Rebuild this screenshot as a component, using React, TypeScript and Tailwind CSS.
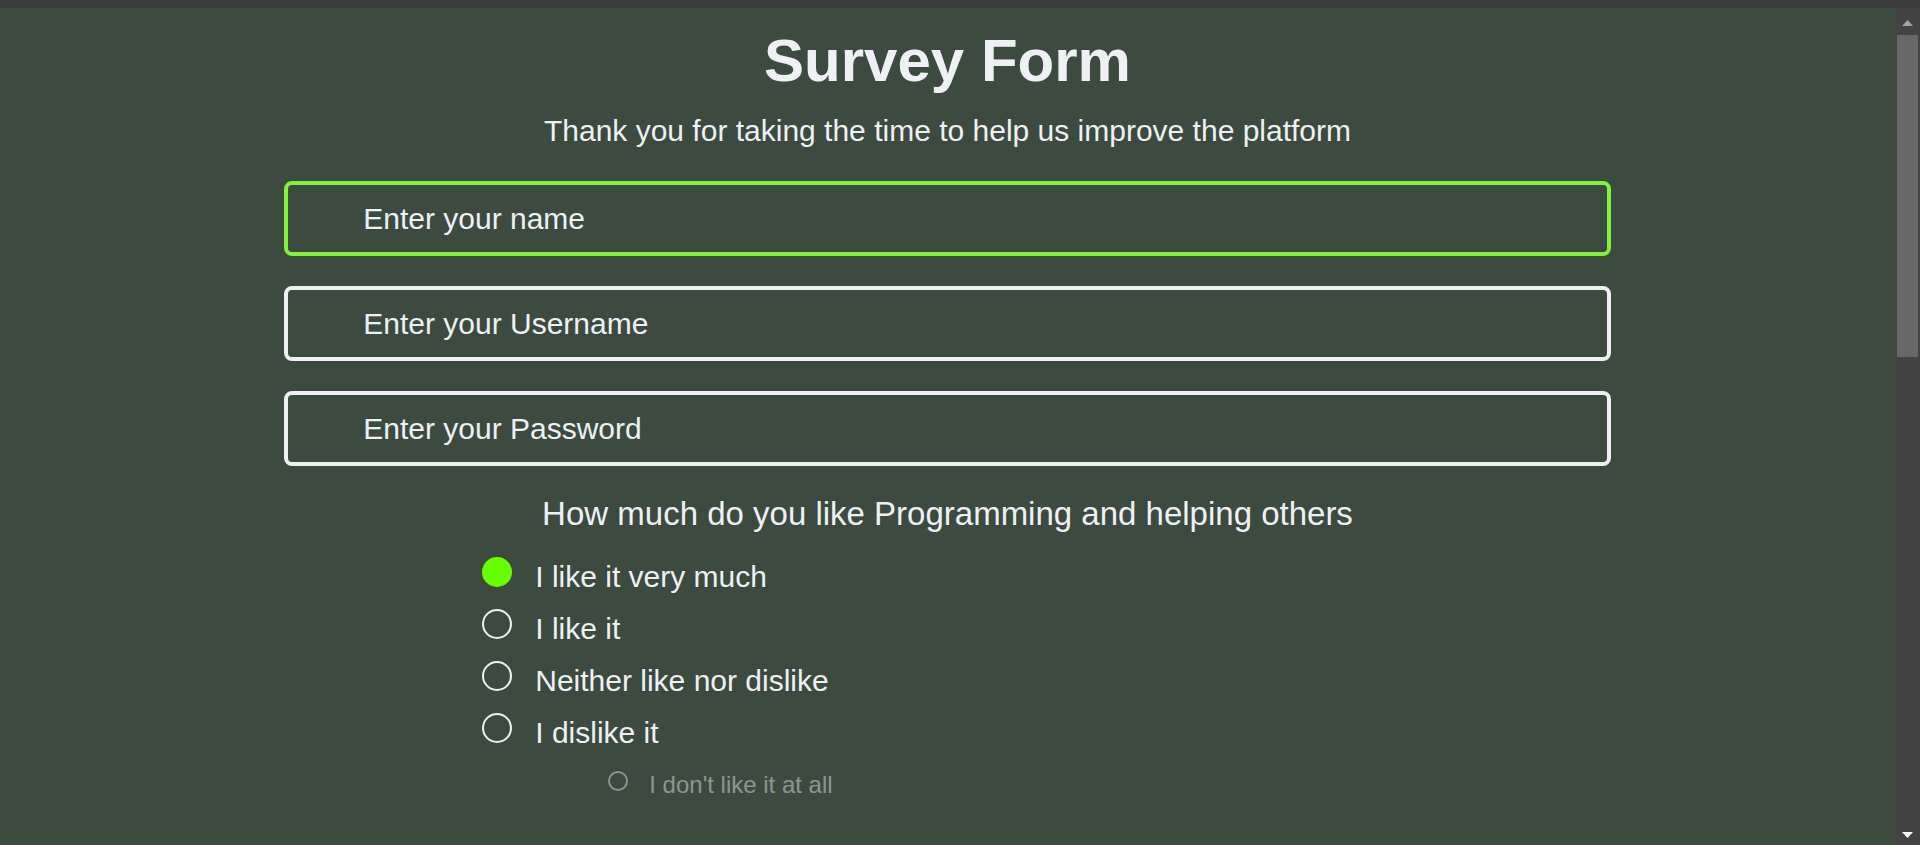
import { useState } from 'react';

const OPTIONS = [
    'I like it very much',
    'I like it',
    'Neither like nor dislike',
    'I dislike it',
];

const FIELDS = [
    { name: 'name', type: 'text', placeholder: 'Enter your name' },
    { name: 'username', type: 'text', placeholder: 'Enter your Username' },
    { name: 'password', type: 'password', placeholder: 'Enter your Password' },
];

export default function App() {
    const [choice, setChoice] = useState(0);

    return (
        <div className="h-screen flex flex-col bg-[#3c4a40] overflow-hidden font-['Liberation_Sans',Arial,sans-serif] text-[#eef0f4]">
            {/* Top strip */}
            <div className="h-[8px] shrink-0 bg-[#3c3c3c]" />

            <div className="flex flex-1 min-h-0">
                {/* Page */}
                <main className="flex-1 flex flex-col items-center pt-[18px]">
                    <h1 className="text-[60px] leading-[69px] font-bold">Survey Form</h1>
                    <p className="mt-[18px] text-[30px] leading-[36px]">
                        Thank you for taking the time to help us improve the platform
                    </p>

                    <form className="w-[70%] mt-[32px] flex flex-col">
                        <div className="flex flex-col gap-[30px]">
                            {FIELDS.map((field, i) => (
                                <input
                                    key={field.name}
                                    type={field.type}
                                    name={field.name}
                                    placeholder={field.placeholder}
                                    className={`h-[75px] w-full rounded-[8px] border-4 bg-transparent pl-[75px] text-[30px] text-[#eef0f4] placeholder:text-[#eef0f4] outline-none ${
                                        i === 0 ? 'border-[#84f23a]' : 'border-[#eef0f4]'
                                    }`}
                                />
                            ))}
                        </div>

                        {/* Question */}
                        <p className="mt-[29px] text-center text-[33px] leading-[38px]">
                            How much do you like Programming and helping others
                        </p>

                        <div className="mt-[18px] pl-[198px] flex flex-col">
                            {OPTIONS.map((option, i) => (
                                <label
                                    key={option}
                                    onClick={() => setChoice(i)}
                                    className="flex items-start h-[52px] cursor-pointer"
                                >
                                    <span
                                        className={`mt-[6px] w-[30px] h-[30px] rounded-full shrink-0 ${
                                            choice === i
                                                ? 'bg-[#66ff00]'
                                                : 'border-[2.5px] border-[#eef0f4]'
                                        }`}
                                    />
                                    <span className="ml-[23px] text-[30px] leading-[52px]">
                                        {option}
                                    </span>
                                </label>
                            ))}

                            {/* Disabled option */}
                            <div className="mt-[11px] pl-[126px] flex items-start h-[30px] opacity-45">
                                <span className="w-[20px] h-[20px] mt-[1px] rounded-full border-2 border-[#eef0f4] shrink-0" />
                                <span className="ml-[21px] text-[24px] leading-[30px]">
                                    I don't like it at all
                                </span>
                            </div>
                        </div>
                    </form>
                </main>

                {/* Scrollbar */}
                <div className="w-[25px] shrink-0 bg-[#434343] flex flex-col pt-[12px] pb-[7px]">
                    <svg width="11" height="6" viewBox="0 0 11 6" className="self-center">
                        <path d="M5.5 0 L11 6 L0 6 Z" fill="#a3a3a3" />
                    </svg>
                    <div className="mt-[9px] ml-[2px] w-[21px] h-[322px] bg-[#686868]" />
                    <div className="flex-1" />
                    <svg width="11" height="6" viewBox="0 0 11 6" className="self-center">
                        <path d="M0 0 L11 0 L5.5 6 Z" fill="#ffffff" />
                    </svg>
                </div>
            </div>
        </div>
    );
}
